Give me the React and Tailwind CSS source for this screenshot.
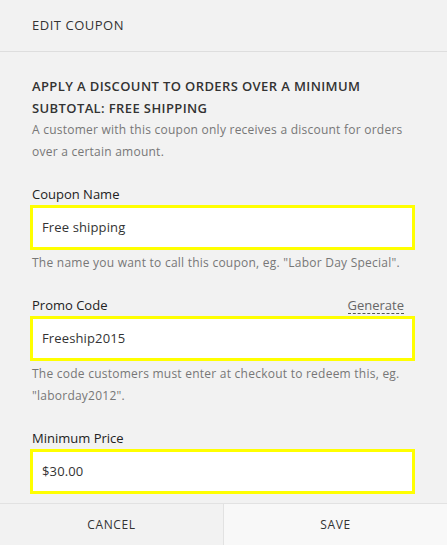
const fields = [
  {
    label: 'Coupon Name',
    value: 'Free shipping',
    help: 'The name you want to call this coupon, eg. "Labor Day Special".',
  },
  {
    label: 'Promo Code',
    value: 'Freeship2015',
    help: 'The code customers must enter at checkout to redeem this, eg. "laborday2012".',
    action: 'Generate',
  },
  {
    label: 'Minimum Price',
    value: '$30.00',
  },
];

const Field = ({ label, value, help, action }) => (
  <div className="mt-[23px]">
    <div className="flex h-[16px] items-center justify-between pr-[11px]">
      <label className="text-[13px] font-medium leading-[16px] text-[#222]">{label}</label>
      {action && (
        <button className="border-b border-dashed border-[#555] text-[13px] leading-[16px] text-[#666]">
          {action}
        </button>
      )}
    </div>
    <div className="mt-[3px] -ml-[2px] flex h-[45px] items-center border-[3px] border-[#ffff00] bg-white px-[9px] text-[13px] tracking-[0.01em] text-[#333]">
      {value}
    </div>
    {help && (
      <p className="mt-[2px] text-[12px] leading-[22px] tracking-[0.02em] text-[#777]">{help}</p>
    )}
  </div>
);

const App = () => {
  return (
    <div
      className="flex h-[545px] w-[447px] flex-col bg-[#f2f2f2]"
      style={{ fontFamily: '"Open Sans", "Liberation Sans", sans-serif' }}
    >
      <div className="flex h-[52px] shrink-0 items-center border-b border-[#dedede] px-[32px] text-[13px] tracking-[0.04em] text-[#333]">
        EDIT COUPON
      </div>

      <div className="flex-1 overflow-hidden px-[32px] pt-[23px]">
        <h2 className="text-[13px] font-semibold uppercase leading-[22px] tracking-[0.03em] text-[#333]">
          Apply a discount to orders over a minimum subtotal: Free shipping
        </h2>
        <p className="text-[12px] leading-[22px] tracking-[0.02em] text-[#777]">
          A customer with this coupon only receives a discount for orders over a certain amount.
        </p>
        {fields.map((f) => (
          <Field key={f.label} {...f} />
        ))}
      </div>

      <div className="flex h-[42px] shrink-0 border-t border-[#e2e2e2] text-[12px] tracking-[0.05em] text-[#333]">
        <button className="flex-1 bg-[#f2f2f2]">CANCEL</button>
        <button className="flex-1 border-l border-[#e2e2e2] bg-[#f8f8f8]">SAVE</button>
      </div>
    </div>
  );
};

export default App;
